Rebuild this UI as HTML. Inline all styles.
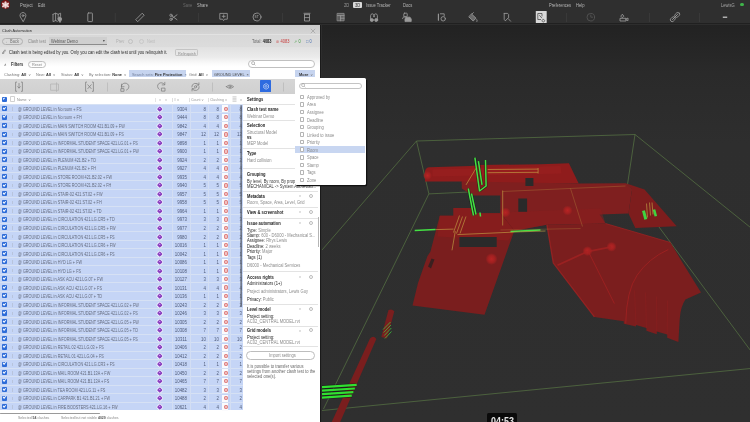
<!DOCTYPE html>
<html><head><meta charset="utf-8">
<style>
*{box-sizing:border-box;margin:0;padding:0}
html,body{width:750px;height:422px;overflow:hidden;background:#2d2d2d;font-family:"Liberation Sans",sans-serif}
.a{position:absolute}
.t{position:absolute;white-space:nowrap;line-height:1}
#menubar{left:0;top:0;width:750px;height:10.5px;background:#2f2f2f}
#toolbar{left:0;top:10.5px;width:750px;height:13.5px;background:#2f2f2f;border-bottom:0.6px solid #202020}
.mi{font-size:45.92px;color:#b9b9b9;top:2.5px;transform:scale(.0893,.1);transform-origin:0 0}
.sep{position:absolute;top:13px;width:0.6px;height:9px;background:#4a4a4a}
.ic{position:absolute;top:11px;width:14px;height:12px}
#panel{left:0;top:24.5px;width:320.5px;height:397.5px;background:#fff;border-right:1px solid #1a1a1a;overflow:hidden}
#phead{left:0;top:0;width:320px;height:10px;background:linear-gradient(#cbcbcb,#d5d5d5);border-bottom:0.5px solid #e2e2e2}
#ptop{left:0;top:10px;width:320px;height:44px;background:linear-gradient(#d8d8d8 0%,#dcdcdc 27.3%,#e1e1e1 28.4%,#ebebeb 50%,#f9f9f9 63.6%,#ffffff 72.7%)}
.pill{position:absolute;border:0.6px solid #9a9a9a;border-radius:4px;background:transparent}
.chip{position:absolute;background:#c6d4ef;height:7.2px;top:45.8px}
.f{font-size:43.68px;color:#777;top:47.6px;transform:scale(.0893,.1);transform-origin:0 0}
.f b{color:#333}
#ptools{left:0;top:54px;width:320px;height:15px;background:linear-gradient(#d6d6d6,#d0d0d0)}
#thead{left:0;top:69px;width:243px;height:10.2px;background:#fff}
.row{position:absolute;left:0;width:243px;height:8.514px;background:#c5d5f6;border-top:0.5px solid #d6e1f4}
.row .cb{position:absolute;left:2px;top:1.4px;width:4.8px;height:5.1px;background:#2d6cd8;border-radius:0.9px}
.row .cb:after{content:"";position:absolute;left:1.2px;top:0.9px;width:1.9px;height:1.1px;border-left:0.7px solid #fff;border-bottom:0.7px solid #fff;transform:rotate(-45deg)}
.row .tick{position:absolute;left:12.3px;top:2.5px;width:0.4px;height:3.5px;background:#b8c4dc}
.row .nm{position:absolute;left:17.6px;top:2.1px;font-size:47px;line-height:1;color:#656c7e;white-space:nowrap;transform:scale(.0809,.1);transform-origin:0 0}
.row .pu{position:absolute;left:157.7px;top:2.1px;width:3.6px;height:3.6px;border-radius:0.8px;background:#8a3fc0;transform:rotate(45deg);box-shadow:0 0 0.3px 0.8px rgba(255,255,255,0.75)}
.row .pu:after{content:"";position:absolute;left:1.2px;top:1.2px;width:1.2px;height:1.2px;background:#f0c8f8;border-radius:50%}
.row span.id,.row span.ct,.row span.cl,.row span.v4{position:absolute;top:2.1px;font-size:47px;line-height:1;color:#505c7a;text-align:right;width:213.4px;transform:scale(.0937,.1);transform-origin:0 0}
.row span.id{left:167.2px}
.row span.ct{left:185.7px}
.row span.cl{left:199.2px}
.row span.v4{left:222.3px}
.row .st{position:absolute;left:221.9px;top:0.6px;width:6px;height:7.4px;background:#fbfbfd}
.row .st:after{content:"";position:absolute;left:1.9px;top:1.4px;width:2.1px;height:2.3px;background:#f2c4c4;border:0.4px solid #de8080;border-radius:40%}
.colsep{position:absolute;top:79.2px;width:0.7px;height:306.5px;background:#d3def3}
#settings{left:242.5px;top:69px;width:76px;height:328.5px;background:#fff}
#setshadow{left:239.6px;top:80.1px;width:2.6px;height:202.4px;background:linear-gradient(90deg,rgba(110,118,135,0.5),rgba(80,86,100,0.85));border-radius:1px}
.sh{font-size:45.92px;color:#222;font-weight:bold;transform:scale(.0893,.1);transform-origin:0 0}
.sv{font-size:45.92px;color:#8a8a8a;transform:scale(.0893,.1);transform-origin:0 0}
.sk{font-size:45.92px;color:#333;transform:scale(.0893,.1);transform-origin:0 0}
.hr{position:absolute;left:0.5px;width:75px;height:0.5px;background:#e3e3e3}
.sv b,.sk b{color:#262626;font-weight:normal}
.gear{width:4px;height:4px;border:0.6px solid #bbb;border-radius:50%}
#settings{overflow:hidden}
#popup{left:295.4px;top:77.7px;width:70.6px;height:107.2px;background:#fff;border-radius:1.5px;box-shadow:1.2px 1.2px 0 #121212}
.pit{position:absolute;left:0;width:70px;height:7.4px}
.pit.hl{background:#c8d6f1}
.pit i{position:absolute;left:4.4px;top:1.5px;width:4.6px;height:4.6px;border:0.5px solid #b5b5b5;border-radius:0.9px;background:#fff}
.pit span{position:absolute;left:11.7px;top:1.8px;font-size:45.92px;line-height:1;color:#8a8a8a;white-space:nowrap;transform:scale(.0893,.1);transform-origin:0 0}
#view{left:321.5px;top:24.5px;width:428.5px;height:397.5px;background:#2e2e2e;overflow:hidden}
</style></head><body>
<div id="root" style="position:absolute;left:0;top:0;width:750px;height:422px;overflow:hidden;will-change:transform">
<div id="menubar" class="a">
  <div class="a" style="left:1.4px;top:-0.4px;width:9px;height:9.6px;border-radius:50%;background:#761313"></div>
  <svg class="a" style="left:1.4px;top:-0.4px" width="9" height="9.6" viewBox="0 0 10 10.6"><g stroke="#e9cfcf" stroke-width="2.3" stroke-linecap="round"><line x1="5" y1="2.4" x2="5" y2="8.4"/><line x1="2.2" y1="4" x2="7.8" y2="7"/><line x1="2.2" y1="7" x2="7.8" y2="4"/></g><circle cx="5" cy="5.4" r="1" fill="#f4e4e4"/></svg>
  <span class="t mi" style="left:20px">Project</span>
  <span class="t mi" style="left:38px">Edit</span>
  <span class="t mi" style="left:182.5px;color:#6a6a6a">Save</span>
  <span class="t mi" style="left:196.7px">Share</span>
  <span class="t mi" style="left:344px;color:#9a9a9a">2D</span>
  <div class="a" style="left:353.3px;top:2px;width:8.4px;height:5.8px;background:#d8d8d8;border-radius:1px"></div>
  <span class="t mi" style="left:354.8px;color:#333;top:2.9px">3D</span>
  <span class="t mi" style="left:366px">Issue Tracker</span>
  <span class="t mi" style="left:402.5px">Docs</span>
  <span class="t mi" style="left:548.7px">Preferences</span>
  <span class="t mi" style="left:575.8px">Help</span>
  <span class="t mi" style="left:721px;color:#a9a9a9">LewisG</span>
  <div class="a" style="left:740px;top:2.7px;width:3.6px;height:3.6px;border-radius:50%;background:#3fb34a"></div>
</div>
<div id="toolbar" class="a"></div>
<svg class="a" style="left:0;top:0" width="750" height="25" viewBox="0 0 750 25">
<g fill="none" stroke="#9a9a9a" stroke-width="0.85" stroke-linecap="round" stroke-linejoin="round">
  <!-- pin -->
  <path d="M23 21.4 L20.4 17 A3 3 0 1 1 25.6 17 Z"/><circle cx="23" cy="15.6" r="0.9"/>
  <!-- map with pin -->
  <path d="M53 14.3 L55.6 13.2 L58.2 14.3 L60.6 13.2 V16.4 M58.2 14.3 V18.4 M55.6 13.2 V20.6 M53 14.3 V21.6 L55.6 20.6 L57.4 21.3"/>
  <path d="M59.8 22.2 L58.1 19.8 A1.9 1.9 0 1 1 61.5 19.8 Z" fill="#9a9a9a"/>
  <!-- phone -->
  <rect x="87.8" y="13" width="4.6" height="8.6" rx="0.6"/>
  <!-- ruler -->
  <path d="M136 19.4 L142.2 13.2 L144.2 15.2 L138 21.4 Z"/>
  <!-- scissors -->
  <circle cx="171" cy="15.3" r="1.2"/><circle cx="171" cy="19.3" r="1.2"/>
  <path d="M172 16 L177 19.7 M172 18.6 L177 14.8"/>
  <!-- comment plus -->
  <path d="M220.2 13.4 H227.3 V19.2 H224.6 L223.6 20.6 L222.6 19.2 H220.2 Z"/><path d="M223.7 14.8 V17.8 M222.2 16.3 H225.2"/>
  <!-- ST -->
  <circle cx="257" cy="17" r="4"/>
  <!-- stack -->
  <path d="M304 13.3 H310 M304.5 14.6 H309.5 M304.5 14.6 V21 H309.5 V14.6 M304.5 17.6 H309.5"/>
  <!-- grid -->
  <rect x="337.5" y="13.4" width="6.6" height="7.4" fill="#5c5c5c" stroke="#8c8c8c"/><path d="M337.5 15.6 H344.1 M340.6 15.6 V20.8 M340.6 18.2 H344.1"/>
  <!-- binoculars -->
  <path d="M370.6 20 V15.6 Q370.8 13.8 372.4 13.8 Q373.6 13.8 373.7 15.4 V17 H374.3 V15.4 Q374.4 13.8 375.6 13.8 Q377.2 13.8 377.4 15.6 V20"/>
  <circle cx="371.8" cy="20" r="1.5" fill="#9a9a9a"/><circle cx="376.2" cy="20" r="1.5" fill="#9a9a9a"/>
  <!-- people+car -->
  <rect x="403.8" y="13.2" width="3.4" height="3.6" rx="0.6"/><path d="M402.6 18.6 L403.6 16.8 H406.2"/>
  <path d="M405 21.2 V19 L406 17.2 H410 L411.2 19 V21.2 Z" fill="#9a9a9a"/>
  <!-- icon 441 -->
  <path d="M438.4 14 V20.2" stroke-width="1.1"/><path d="M440.4 13.8 H444.2 V16"/><circle cx="443.2" cy="18.8" r="2.2"/>
  <!-- paint bucket -->
  <path d="M471.8 14.2 L476 18.2 L473.2 21 L469 17 Z" fill="#6a6a6a"/><path d="M471.8 14.2 L473.4 12.6 M476.8 19.6 Q477.6 21 477 21.6"/>
  <!-- icon 507 -->
  <path d="M504.2 13.4 H507.6 L508.6 14.4 V17.6 M504.2 13.4 V19.4 L505.4 20.8 M505.6 20.6 L507.8 18.2 L510.6 21.2"/>
  <!-- clock dim -->
  <circle cx="590.8" cy="17.2" r="3.8" stroke="#555"/><path d="M590.8 15 V17.2 H592.6" stroke="#555"/>
  <!-- person+camera -->
  <path d="M622.3 14.6 A1.4 1.4 0 1 0 622.4 14.6 M620 20.6 V18.3 H626 V20.6 Z M626 19 L628 18 V20.6 L626 19.8"/>
  <!-- link -->
  <path d="M672.5 19.5 L677.5 14.5" stroke-width="1"/><rect x="671" y="16.5" width="3.6" height="5.4" rx="1.8" transform="rotate(45 672.8 19.2)"/><rect x="675.4" y="12.2" width="3.6" height="5.4" rx="1.8" transform="rotate(45 677.2 14.9)"/>
</g>
<g fill="#8c8c8c" font-family="Liberation Sans" font-size="3.2" font-weight="bold"><text x="254.6" y="18.2">ST</text></g>
<g fill="#444"><rect x="114.9" y="13" width="0.5" height="9"/><rect x="198.1" y="13" width="0.5" height="9"/><rect x="282.3" y="13" width="0.5" height="9"/><rect x="566.5" y="13" width="0.5" height="9"/><rect x="649.3" y="13" width="0.5" height="9"/><rect x="699.5" y="13" width="0.5" height="9"/></g>
<rect x="535.8" y="10.9" width="10.9" height="12.1" fill="#d9d9d9" rx="0.6"/>
<path d="M537.8 13.5 H542 V16.4 M537.8 13.5 V19.5 H541 M539.3 15.2 L542 18.2 M543.3 19.4 A1.3 1.3 0 1 0 543.4 19.4" stroke="#3c3c3c" stroke-width="0.7" fill="none"/>
<rect x="722.8" y="16.6" width="4.4" height="1.2" fill="#d0d0d0"/>
</svg>

<div id="panel" class="a">
  <div id="phead" class="a"></div>
  <span class="t" style="left:2px;top:3.9px;font-size:42.56px;color:#2a2a2a;transform:scale(.0893,.1);transform-origin:0 0">Clash Automation</span>
  <svg class="a" style="left:309.5px;top:3px" width="6" height="6" viewBox="0 0 6 6"><g stroke="#8a8a8a" stroke-width="0.5"><line x1="0.8" y1="0.8" x2="5.2" y2="5.2"/><line x1="5.2" y1="0.8" x2="0.8" y2="5.2"/></g></svg>
  <div id="ptop" class="a"></div>
  <!-- back row -->
  <div class="pill" style="left:2px;top:13.2px;width:20.5px;height:7.1px;border-color:#b0b0b0"></div>
  <span class="t" style="left:5px;top:14.7px;font-size:44.8px;color:#777;transform:scale(.0893,.1);transform-origin:0 0">&#8592; Back</span>
  <span class="t" style="left:28px;top:14.7px;font-size:44.8px;color:#8a8a8a;transform:scale(.0893,.1);transform-origin:0 0">Clash test</span>
  <div class="a" style="left:48.5px;top:12.8px;width:58.5px;height:7.5px;background:#cfcfcf;border-bottom:0.6px solid #8c8c8c"></div>
  <span class="t" style="left:51px;top:14.7px;font-size:44.8px;color:#555;transform:scale(.0893,.1);transform-origin:0 0">Webinar Demo</span>
  <span class="t" style="left:102.8px;top:14.9px;font-size:40.32px;color:#444;transform:scale(.0893,.1);transform-origin:0 0">&#9662;</span>
  <span class="t" style="left:116px;top:14.7px;font-size:44.8px;color:#b0b0b0;transform:scale(.0893,.1);transform-origin:0 0">Prev</span>
  <div class="a" style="left:128.3px;top:14px;width:5px;height:5px;border:0.5px solid #c0c0c0;border-radius:50%"></div>
  <div class="a" style="left:138.5px;top:14px;width:5px;height:5px;border:0.5px solid #c8c8c8;border-radius:50%"></div>
  <span class="t" style="left:147px;top:14.7px;font-size:44.8px;color:#bcbcbc;transform:scale(.0893,.1);transform-origin:0 0">Next</span>
  <span class="t" style="left:252px;top:14.6px;font-size:44.8px;color:#666;transform:scale(.0893,.1);transform-origin:0 0">Total: <b style="color:#222">4083</b></span>
  <span class="t" style="left:275.5px;top:14.6px;font-size:44.8px;color:#c83a3a;transform:scale(.0893,.1);transform-origin:0 0">&#8856; 4083</span>
  <span class="t" style="left:294px;top:14.6px;font-size:44.8px;color:#3a9a3a;transform:scale(.0893,.1);transform-origin:0 0">&#8599; 0</span>
  <span class="t" style="left:306px;top:14.6px;font-size:44.8px;color:#4a70b0;transform:scale(.0893,.1);transform-origin:0 0">&#9633; 0</span>
  <!-- notice -->
  <svg class="a" style="left:2.3px;top:24.3px" width="4" height="5" viewBox="0 0 4 5"><path d="M0.6 4.4 L0.9 3.2 L3 0.8 L3.7 1.5 L1.6 3.9 Z M0.4 4.8 H2.2" stroke="#444" stroke-width="0.45" fill="none"/></svg>
  <span class="t" style="left:9px;top:25.5px;font-size:46.144px;color:#2c2c2c;transform:scale(.0893,.1);transform-origin:0 0">Clash test is being edited by you. Only you can edit the clash test until you relinquish it.</span>
  <div class="pill" style="left:175px;top:24.5px;width:22.5px;height:6.7px;border-radius:1.2px;border-color:#c4c4c4"></div>
  <span class="t" style="left:177.5px;top:26.1px;font-size:42.56px;color:#8a8a8a;transform:scale(.0893,.1);transform-origin:0 0">Relinquish</span>
  <!-- filters -->
  <span class="t" style="left:4px;top:37px;font-size:44.8px;color:#555;transform:scale(.0893,.1);transform-origin:0 0">&#8743;</span>
  <span class="t" style="left:11px;top:37px;font-size:45.92px;color:#333;font-weight:bold;transform:scale(.0893,.1);transform-origin:0 0">Filters</span>
  <div class="pill" style="left:27.5px;top:36.3px;width:18px;height:6.8px;border-color:#bdbdbd"></div>
  <span class="t" style="left:32px;top:37.6px;font-size:42.56px;color:#888;transform:scale(.0893,.1);transform-origin:0 0">Reset</span>
  <div class="pill" style="left:248.3px;top:35.5px;width:66.4px;height:7.5px;border-color:#c0c0c0;background:#fff"></div>
  <svg class="a" style="left:250.8px;top:36.8px" width="5" height="5" viewBox="0 0 5 5"><circle cx="2.1" cy="2.1" r="1.5" stroke="#777" stroke-width="0.5" fill="none"/><path d="M3.2 3.2 L4.4 4.4" stroke="#777" stroke-width="0.5"/></svg>
  <span class="t f" style="left:4px">Clashing: <b>All</b> &nbsp;&#709;</span>
  <span class="t f" style="left:36px">New: <b>All</b> &nbsp;&#709;</span>
  <span class="t f" style="left:61px">Status: <b>All</b> &nbsp;&#709;</span>
  <span class="t f" style="left:89px">By selection: <b>None</b> &nbsp;&#709;</span>
  <div class="chip" style="left:129.2px;width:56.6px"></div>
  <span class="t f" style="left:132px;color:#6f7c99">Search sets: <b>Fire Protection</b> &nbsp;&#215;</span>
  <span class="t f" style="left:189px">Grid: <b>All</b> &nbsp;&#709;</span>
  <div class="chip" style="left:211.7px;width:38.3px"></div>
  <span class="t f" style="left:214px;color:#444">GROUND LEVEL &nbsp;&#215;</span>
  <div class="chip" style="left:295.3px;width:19.4px"></div>
  <span class="t f" style="left:299px"><b>More</b> &nbsp;&#709;</span>
  <!-- panel toolbar -->
  <div id="ptools" class="a"></div>
  <svg class="a" style="left:0;top:54px" width="320" height="15" viewBox="0 78.5 320 15">
<g fill="none" stroke="#7e7e7e" stroke-width="0.75" stroke-linecap="round" stroke-linejoin="round">
  <path d="M16.6 81.6 H15.6 V90.8 H16.6 M21.4 81.6 H22.4 V90.8 H21.4 M19 83 V87.4 M17.7 86.2 L19 87.6 L20.3 86.2"/>
  <path d="M51 83.5 H58.5 V89.8 H51 Z M56.5 82.3 V91" stroke="#b3b3b3"/>
  <path d="M86.6 81.6 H85.6 V90.8 H86.6 M92.4 81.6 H93.4 V90.8 H92.4 M87.8 84.3 L91.2 88.1 M91.2 84.3 L87.8 88.1"/>
  <path d="M121.8 88 A3.8 3.6 0 1 1 126.5 89.6 M121.6 83.6 L121.4 86.4 L124 86.2"/><rect x="121.2" y="88.2" width="2.8" height="2.6"/>
  <path d="M164.6 84 A3.8 3.6 0 1 0 159.2 88.8 M164.8 81.8 L164.8 84.4 L162.2 84.4"/><rect x="161.8" y="87.6" width="3.2" height="3"/>
  <path d="M191.8 86.4 A3.8 3.4 0 0 1 198.8 84.4 M199.2 86.2 A3.8 3.4 0 0 1 192.2 88.4 M198.9 82.4 L198.9 84.6 L196.8 84.6 M192 90.4 L192 88.2 L194.2 88.2"/><circle cx="195.5" cy="86.3" r="1.1"/>
  <path d="M226.4 86.2 Q230 82.8 233.6 86.2 Q230 89.6 226.4 86.2 Z"/><circle cx="230" cy="86.2" r="1"/>
</g>
<g fill="#aaaaaa"><rect x="107.3" y="82" width="0.5" height="9"/><rect x="212.3" y="82" width="0.5" height="9"/><rect x="283.3" y="82" width="0.5" height="9"/></g>
</svg>

  <div class="a" style="left:260.3px;top:55.8px;width:10.5px;height:11.7px;background:#2e6be0;border-radius:0.6px"></div>
  <svg class="a" style="left:262.5px;top:58.3px" width="6.2" height="6.8" viewBox="0 0 6 7"><path d="M3 0.6 L5.4 2 L5.4 5 L3 6.4 L0.6 5 L0.6 2 Z" stroke="#fff" stroke-width="0.55" fill="none"/><circle cx="3" cy="3.5" r="1" stroke="#fff" stroke-width="0.5" fill="none"/></svg>
  <!-- table header -->
  <div id="thead" class="a"></div>
  <div class="a" style="left:2px;top:72.1px;width:4.8px;height:5.2px;background:#2d6cd8;border-radius:0.9px"></div>
  <div class="a" style="left:9.8px;top:71.8px;width:5px;height:5.5px;border:0.5px solid #d2d2d2;border-radius:0.9px"></div><div class="a" style="left:3.2px;top:73.4px;width:2px;height:1.2px;border-left:0.6px solid #fff;border-bottom:0.6px solid #fff;transform:rotate(-45deg)"></div>
  <span class="t" style="left:17px;top:73px;font-size:40.32px;color:#888;transform:scale(.0893,.1);transform-origin:0 0">Name &nbsp;&#709;</span>
  <span class="t" style="left:154.5px;top:73px;font-size:40.32px;color:#aaa;transform:scale(.0893,.1);transform-origin:0 0">| &nbsp;&nbsp;&#709; &nbsp;&nbsp;&nbsp;&#709;</span>
  <span class="t" style="left:172px;top:73px;font-size:40.32px;color:#999;transform:scale(.0893,.1);transform-origin:0 0">| # &#709;</span>
  <span class="t" style="left:189px;top:73px;font-size:40.32px;color:#999;transform:scale(.0893,.1);transform-origin:0 0">| Count &#709;</span>
  <span class="t" style="left:207.5px;top:73px;font-size:40.32px;color:#999;transform:scale(.0893,.1);transform-origin:0 0">| Clashing &#709;</span>
  <svg class="a" style="left:231.5px;top:71.6px" width="5" height="6" viewBox="0 0 5 6"><path d="M0.5 0.8 H4.5 M0.5 2.3 H4.5 M0.5 3.8 H4.5 M0.5 5.3 H4.5" stroke="#999" stroke-width="0.45"/></svg>
  <span class="t" style="left:239.8px;top:73px;font-size:40.32px;color:#999;transform:scale(.0893,.1);transform-origin:0 0">&#709;</span>
</div>
<div class="a" style="left:0;top:24.5px;width:320.5px;height:397.5px;overflow:hidden;pointer-events:none">
<div class="row" style="top:79.20px"><i class="cb"></i><i class="tick"></i><span class="nm">@ GROUND LEVEL in No room + FS</span><i class="pu"></i><span class="id">9304</span><span class="ct">8</span><span class="cl">8</span><i class="st"></i><span class="v4">8</span></div>
<div class="row" style="top:87.71px"><i class="cb"></i><i class="tick"></i><span class="nm">@ GROUND LEVEL in No room + FH</span><i class="pu"></i><span class="id">9444</span><span class="ct">8</span><span class="cl">8</span><i class="st"></i><span class="v4">8</span></div>
<div class="row" style="top:96.23px"><i class="cb"></i><i class="tick"></i><span class="nm">@ GROUND LEVEL in MAIN SWITCH ROOM 421.B1.09 + FW</span><i class="pu"></i><span class="id">9842</span><span class="ct">4</span><span class="cl">4</span><i class="st"></i><span class="v4">4</span></div>
<div class="row" style="top:104.74px"><i class="cb"></i><i class="tick"></i><span class="nm">@ GROUND LEVEL in MAIN SWITCH ROOM 421.B1.09 + FS</span><i class="pu"></i><span class="id">9847</span><span class="ct">12</span><span class="cl">12</span><i class="st"></i><span class="v4">12</span></div>
<div class="row" style="top:113.26px"><i class="cb"></i><i class="tick"></i><span class="nm">@ GROUND LEVEL in INFORMAL STUDENT SPACE 421.LG.01 + FS</span><i class="pu"></i><span class="id">9898</span><span class="ct">1</span><span class="cl">1</span><i class="st"></i><span class="v4">1</span></div>
<div class="row" style="top:121.77px"><i class="cb"></i><i class="tick"></i><span class="nm">@ GROUND LEVEL in INFORMAL STUDENT SPACE 421.LG.01 + FW</span><i class="pu"></i><span class="id">9900</span><span class="ct">1</span><span class="cl">1</span><i class="st"></i><span class="v4">1</span></div>
<div class="row" style="top:130.28px"><i class="cb"></i><i class="tick"></i><span class="nm">@ GROUND LEVEL in PLENUM 421.B2 + TD</span><i class="pu"></i><span class="id">9924</span><span class="ct">2</span><span class="cl">2</span><i class="st"></i><span class="v4">2</span></div>
<div class="row" style="top:138.80px"><i class="cb"></i><i class="tick"></i><span class="nm">@ GROUND LEVEL in PLENUM 421.B2 + FH</span><i class="pu"></i><span class="id">9927</span><span class="ct">4</span><span class="cl">4</span><i class="st"></i><span class="v4">4</span></div>
<div class="row" style="top:147.31px"><i class="cb"></i><i class="tick"></i><span class="nm">@ GROUND LEVEL in STORE ROOM 421.B2.02 + FW</span><i class="pu"></i><span class="id">9935</span><span class="ct">4</span><span class="cl">4</span><i class="st"></i><span class="v4">4</span></div>
<div class="row" style="top:155.83px"><i class="cb"></i><i class="tick"></i><span class="nm">@ GROUND LEVEL in STORE ROOM 421.B2.02 + FH</span><i class="pu"></i><span class="id">9940</span><span class="ct">5</span><span class="cl">5</span><i class="st"></i><span class="v4">5</span></div>
<div class="row" style="top:164.34px"><i class="cb"></i><i class="tick"></i><span class="nm">@ GROUND LEVEL in STAIR-02 421.ST.02 + FW</span><i class="pu"></i><span class="id">9957</span><span class="ct">5</span><span class="cl">5</span><i class="st"></i><span class="v4">5</span></div>
<div class="row" style="top:172.85px"><i class="cb"></i><i class="tick"></i><span class="nm">@ GROUND LEVEL in STAIR-02 421.ST.02 + FH</span><i class="pu"></i><span class="id">9958</span><span class="ct">5</span><span class="cl">5</span><i class="st"></i><span class="v4">5</span></div>
<div class="row" style="top:181.37px"><i class="cb"></i><i class="tick"></i><span class="nm">@ GROUND LEVEL in STAIR-02 421.ST.02 + TD</span><i class="pu"></i><span class="id">9964</span><span class="ct">1</span><span class="cl">1</span><i class="st"></i><span class="v4">1</span></div>
<div class="row" style="top:189.88px"><i class="cb"></i><i class="tick"></i><span class="nm">@ GROUND LEVEL in CIRCULATION 421.LG.CR5 + TD</span><i class="pu"></i><span class="id">9973</span><span class="ct">3</span><span class="cl">3</span><i class="st"></i><span class="v4">3</span></div>
<div class="row" style="top:198.40px"><i class="cb"></i><i class="tick"></i><span class="nm">@ GROUND LEVEL in CIRCULATION 421.LG.CR5 + FW</span><i class="pu"></i><span class="id">9977</span><span class="ct">2</span><span class="cl">2</span><i class="st"></i><span class="v4">2</span></div>
<div class="row" style="top:206.91px"><i class="cb"></i><i class="tick"></i><span class="nm">@ GROUND LEVEL in CIRCULATION 421.LG.CR5 + FS</span><i class="pu"></i><span class="id">9980</span><span class="ct">2</span><span class="cl">2</span><i class="st"></i><span class="v4">2</span></div>
<div class="row" style="top:215.42px"><i class="cb"></i><i class="tick"></i><span class="nm">@ GROUND LEVEL in CIRCULATION 421.LG.CR6 + FW</span><i class="pu"></i><span class="id">10016</span><span class="ct">1</span><span class="cl">1</span><i class="st"></i><span class="v4">1</span></div>
<div class="row" style="top:223.94px"><i class="cb"></i><i class="tick"></i><span class="nm">@ GROUND LEVEL in CIRCULATION 421.LG.CR6 + FS</span><i class="pu"></i><span class="id">10042</span><span class="ct">1</span><span class="cl">1</span><i class="st"></i><span class="v4">1</span></div>
<div class="row" style="top:232.45px"><i class="cb"></i><i class="tick"></i><span class="nm">@ GROUND LEVEL in HYD LG + FW</span><i class="pu"></i><span class="id">10086</span><span class="ct">1</span><span class="cl">1</span><i class="st"></i><span class="v4">1</span></div>
<div class="row" style="top:240.97px"><i class="cb"></i><i class="tick"></i><span class="nm">@ GROUND LEVEL in HYD LG + FS</span><i class="pu"></i><span class="id">10108</span><span class="ct">1</span><span class="cl">1</span><i class="st"></i><span class="v4">1</span></div>
<div class="row" style="top:249.48px"><i class="cb"></i><i class="tick"></i><span class="nm">@ GROUND LEVEL in ASK ACU 421.LG.07 + FW</span><i class="pu"></i><span class="id">10127</span><span class="ct">3</span><span class="cl">3</span><i class="st"></i><span class="v4">3</span></div>
<div class="row" style="top:257.99px"><i class="cb"></i><i class="tick"></i><span class="nm">@ GROUND LEVEL in ASK ACU 421.LG.07 + FS</span><i class="pu"></i><span class="id">10131</span><span class="ct">4</span><span class="cl">4</span><i class="st"></i><span class="v4">4</span></div>
<div class="row" style="top:266.51px"><i class="cb"></i><i class="tick"></i><span class="nm">@ GROUND LEVEL in ASK ACU 421.LG.07 + TD</span><i class="pu"></i><span class="id">10136</span><span class="ct">1</span><span class="cl">1</span><i class="st"></i><span class="v4">1</span></div>
<div class="row" style="top:275.02px"><i class="cb"></i><i class="tick"></i><span class="nm">@ GROUND LEVEL in INFORMAL STUDENT SPACE 421.LG.02 + FW</span><i class="pu"></i><span class="id">10243</span><span class="ct">2</span><span class="cl">2</span><i class="st"></i><span class="v4">2</span></div>
<div class="row" style="top:283.54px"><i class="cb"></i><i class="tick"></i><span class="nm">@ GROUND LEVEL in INFORMAL STUDENT SPACE 421.LG.02 + FS</span><i class="pu"></i><span class="id">10246</span><span class="ct">3</span><span class="cl">3</span><i class="st"></i><span class="v4">3</span></div>
<div class="row" style="top:292.05px"><i class="cb"></i><i class="tick"></i><span class="nm">@ GROUND LEVEL in INFORMAL STUDENT SPACE 421.LG.05 + FW</span><i class="pu"></i><span class="id">10305</span><span class="ct">2</span><span class="cl">2</span><i class="st"></i><span class="v4">2</span></div>
<div class="row" style="top:300.56px"><i class="cb"></i><i class="tick"></i><span class="nm">@ GROUND LEVEL in INFORMAL STUDENT SPACE 421.LG.05 + TD</span><i class="pu"></i><span class="id">10308</span><span class="ct">7</span><span class="cl">7</span><i class="st"></i><span class="v4">7</span></div>
<div class="row" style="top:309.08px"><i class="cb"></i><i class="tick"></i><span class="nm">@ GROUND LEVEL in INFORMAL STUDENT SPACE 421.LG.05 + FS</span><i class="pu"></i><span class="id">10311</span><span class="ct">10</span><span class="cl">10</span><i class="st"></i><span class="v4">10</span></div>
<div class="row" style="top:317.59px"><i class="cb"></i><i class="tick"></i><span class="nm">@ GROUND LEVEL in RETAIL 02 421.LG.03 + FS</span><i class="pu"></i><span class="id">10406</span><span class="ct">2</span><span class="cl">2</span><i class="st"></i><span class="v4">2</span></div>
<div class="row" style="top:326.11px"><i class="cb"></i><i class="tick"></i><span class="nm">@ GROUND LEVEL in RETAIL 01 421.LG.04 + FS</span><i class="pu"></i><span class="id">10412</span><span class="ct">2</span><span class="cl">2</span><i class="st"></i><span class="v4">2</span></div>
<div class="row" style="top:334.62px"><i class="cb"></i><i class="tick"></i><span class="nm">@ GROUND LEVEL in CIRCULATION 421.LG.CR3 + FS</span><i class="pu"></i><span class="id">10418</span><span class="ct">1</span><span class="cl">1</span><i class="st"></i><span class="v4">1</span></div>
<div class="row" style="top:343.13px"><i class="cb"></i><i class="tick"></i><span class="nm">@ GROUND LEVEL in MAIL ROOM 421.B1.13A + FW</span><i class="pu"></i><span class="id">10450</span><span class="ct">2</span><span class="cl">2</span><i class="st"></i><span class="v4">2</span></div>
<div class="row" style="top:351.65px"><i class="cb"></i><i class="tick"></i><span class="nm">@ GROUND LEVEL in MAIL ROOM 421.B1.13A + FS</span><i class="pu"></i><span class="id">10465</span><span class="ct">7</span><span class="cl">7</span><i class="st"></i><span class="v4">7</span></div>
<div class="row" style="top:360.16px"><i class="cb"></i><i class="tick"></i><span class="nm">@ GROUND LEVEL in TEA ROOM 421.LG.11 + FS</span><i class="pu"></i><span class="id">10482</span><span class="ct">3</span><span class="cl">3</span><i class="st"></i><span class="v4">3</span></div>
<div class="row" style="top:368.68px"><i class="cb"></i><i class="tick"></i><span class="nm">@ GROUND LEVEL in CARPARK B1 421.B1.21 + FW</span><i class="pu"></i><span class="id">10488</span><span class="ct">2</span><span class="cl">2</span><i class="st"></i><span class="v4">2</span></div>
<div class="row" style="top:377.19px"><i class="cb"></i><i class="tick"></i><span class="nm">@ GROUND LEVEL in FIRE BOOSTERS 421.LG.16 + FW</span><i class="pu"></i><span class="id">10621</span><span class="ct">4</span><span class="cl">4</span><i class="st"></i><span class="v4">4</span></div>
<div class="colsep" style="left:172.3px"></div><div class="colsep" style="left:189.6px"></div><div class="colsep" style="left:208.3px"></div><div class="colsep" style="left:229.6px"></div>
<div class="a" style="left:0;top:388px;width:100px;height:1.6px;background:#9a9a9a;border-radius:1px"></div>
<span class="t" style="left:18px;top:391.4px;font-size:39.2px;color:#888;transform:scale(.0893,.1);transform-origin:0 0">Selected <b style="color:#555">54</b> clashes</span>
<span class="t" style="left:61px;top:391.4px;font-size:39.2px;color:#888;transform:scale(.0893,.1);transform-origin:0 0">Selected but not visible <b style="color:#555">4029</b> clashes</span>
<div id="setshadow" class="a"></div>
<div id="settings" class="a">
<span class="t sh" style="left:4.30px;top:3.73px;">Settings</span>
<div class="hr" style="top:10.10px"></div>
<span class="t sh" style="left:4.30px;top:13.33px;">Clash test name</span>
<span class="t sv" style="left:4.30px;top:20.53px;">Webinar Demo</span>
<div class="hr" style="top:26.50px"></div>
<span class="t sh" style="left:4.30px;top:29.73px;">Selection</span>
<span class="t sv" style="left:4.30px;top:36.53px;">Structural Model</span>
<span class="t sh" style="left:4.30px;top:41.93px;">vs</span>
<span class="t sv" style="left:4.30px;top:47.73px;">MEP Model</span>
<div class="hr" style="top:54.10px"></div>
<span class="t sh" style="left:4.30px;top:57.23px;">Type</span>
<span class="t sv" style="left:4.30px;top:64.23px;">Hard collision</span>
<div class="hr" style="top:74.30px"></div>
<span class="t sh" style="left:4.30px;top:78.13px;">Grouping</span>
<span class="t sk" style="left:4.30px;top:85.33px;">By level, By room, By property</span>
<span class="t sk" style="left:4.30px;top:90.23px;">MECHANICAL -&gt; System Abbreviati...</span>
<div class="hr" style="top:97.20px"></div>
<span class="t sh" style="left:4.30px;top:100.03px;">Metadata</span>
<span class="t" style="left:56.70px;top:100.40px;font-size:38.08px;color:#999;transform:scale(.0893,.1);transform-origin:0 0">&#709;</span>
<div class="a gear" style="left:66.50px;top:100.00px"></div>
<span class="t sv" style="left:4.30px;top:106.93px;">Room, Space, Area, Level, Grid</span>
<div class="hr" style="top:113.50px"></div>
<span class="t sh" style="left:4.30px;top:116.53px;">View &amp; screenshot</span>
<span class="t" style="left:56.70px;top:116.90px;font-size:38.08px;color:#999;transform:scale(.0893,.1);transform-origin:0 0">&#709;</span>
<div class="a gear" style="left:66.50px;top:116.50px"></div>
<div class="hr" style="top:124.20px"></div>
<span class="t sh" style="left:4.30px;top:127.53px;">Issue automation</span>
<span class="t" style="left:56.70px;top:127.90px;font-size:38.08px;color:#999;transform:scale(.0893,.1);transform-origin:0 0">&#709;</span>
<div class="a gear" style="left:66.50px;top:127.50px"></div>
<span class="t sv" style="left:4.30px;top:134.63px;"><b>Type:</b> Simple</span>
<span class="t sv" style="left:4.30px;top:139.53px;"><b>Stamp:</b> 600 - D6000 - Mechanical S...</span>
<span class="t sv" style="left:4.30px;top:144.93px;"><b>Assignee:</b> Rhys Lewis</span>
<span class="t sv" style="left:4.30px;top:150.53px;"><b>Deadline:</b> 2 weeks</span>
<span class="t sv" style="left:4.30px;top:155.63px;"><b>Priority:</b> Major</span>
<span class="t sv" style="left:4.30px;top:161.33px;"><b>Tags (1)</b></span>
<span class="t sv" style="left:4.30px;top:169.43px;">D6000 - Mechanical Services</span>
<div class="hr" style="top:177.00px"></div>
<span class="t sh" style="left:4.30px;top:181.13px;">Access rights</span>
<span class="t" style="left:56.70px;top:181.50px;font-size:38.08px;color:#999;transform:scale(.0893,.1);transform-origin:0 0">&#709;</span>
<div class="a gear" style="left:66.50px;top:181.10px"></div>
<span class="t sv" style="left:4.30px;top:187.83px;"><b>Administrators (1+)</b></span>
<span class="t sv" style="left:4.30px;top:195.63px;">Project administrators, Lewis Guy</span>
<span class="t sv" style="left:4.30px;top:203.13px;"><b>Privacy:</b> Public</span>
<div class="hr" style="top:210.50px"></div>
<span class="t sh" style="left:4.30px;top:213.43px;">Level model</span>
<span class="t" style="left:56.70px;top:213.80px;font-size:38.08px;color:#999;transform:scale(.0893,.1);transform-origin:0 0">&#709;</span>
<div class="a gear" style="left:66.50px;top:213.40px"></div>
<span class="t sv" style="left:4.30px;top:220.43px;"><b>Project setting:</b></span>
<span class="t sv" style="left:4.30px;top:225.53px;">AC02_CENTRAL MODEL.rvt</span>
<div class="hr" style="top:232.50px"></div>
<span class="t sh" style="left:4.30px;top:234.73px;">Grid models</span>
<span class="t" style="left:56.70px;top:235.10px;font-size:38.08px;color:#999;transform:scale(.0893,.1);transform-origin:0 0">&#709;</span>
<div class="a gear" style="left:66.50px;top:234.70px"></div>
<span class="t sv" style="left:4.30px;top:241.63px;"><b>Project setting:</b></span>
<span class="t sv" style="left:4.30px;top:246.53px;">AC02_CENTRAL MODEL.rvt</span>
<div class="hr" style="top:252.50px"></div>
<div class="pill" style="left:3.90px;top:257.00px;width:68.3px;height:9.6px;border-color:#bdbdbd;border-radius:5px"></div>
<span class="t sv" style="left:26.00px;top:259.83px;">Import settings</span>
<span class="t sk" style="left:4.30px;top:270.53px;color:#666">It is possible to transfer various</span>
<span class="t sk" style="left:4.30px;top:275.43px;color:#666">settings from another clash test to the</span>
<span class="t sk" style="left:4.30px;top:280.73px;color:#666">selected one(s).</span>
<div class="a" style="left:75.70px;top:123.50px;width:1.2px;height:30px;background:#b5b5b5"></div>
</div>
</div>
<div id="view" class="a">
<svg width="428.5" height="397.5" viewBox="321.5 24.5 428.5 397.5" style="position:absolute;left:0;top:0">
<defs>
  <linearGradient id="bg" x1="0" y1="0" x2="0" y2="1"><stop offset="0" stop-color="#222222"/><stop offset="0.12" stop-color="#2a2a2a"/><stop offset="0.3" stop-color="#2e2e2e"/><stop offset="1" stop-color="#2f2f2f"/></linearGradient>
  <radialGradient id="sph"><stop offset="0" stop-color="#b82424"/><stop offset="0.6" stop-color="#a02020"/><stop offset="1" stop-color="#a02020" stop-opacity="0"/></radialGradient>
</defs>
<rect x="321.5" y="24.5" width="428.5" height="397.5" fill="url(#bg)"/>
<g stroke="#557143" stroke-width="0.75" fill="none">
  <path d="M416 140.5 L634.5 134 L750 227"/>
  <path d="M416 140.5 L321.5 249.5"/>
  <path d="M416 140.5 L428.4 193.4 L627 184 L634.5 134"/>
  <path d="M428.4 193.4 L323 408.5"/>
  <path d="M627 184 L750 350"/>
  <path d="M321.5 410 L750 368"/>
</g>
<g stroke="none">
  <!-- upper wing -->
  <path fill="#8f1c1c" d="M424.5 171 Q425 167 429 166.8 L470 165.4 L480 164.4 L540 163.8 L568.4 162.8 L578.2 182.9 L461.3 183.5 L461.3 181 L424.5 181 Z"/>
  <!-- middle band -->
  <path fill="#7f1f1f" d="M461.3 181 L578.2 182.9 L625.3 182.8 L631.5 189 L628 213 L599 214 L605 223 L546.4 224.3 L513.8 230.2 L499.8 212.8 L499.8 195 L472 195 L461.3 188 Z"/>
  <path fill="#8c1e1e" opacity="0.5" d="M500 212 L600 208 L605 223 L546.4 224.3 L513.8 230.2 Z"/>
  <path fill="#a02222" opacity="0.45" d="M432 169 L560 165.5 L561 173 L432 176 Z"/>
  <!-- right wing -->
  <path fill="#7d1d1d" d="M625.3 182.8 L644 189 L676.2 225.7 L634.8 227.4 L628 213 L631.5 189 Z"/>
  <!-- lower-left block -->
  <path fill="#7a1e1e" d="M439.3 215.2 L453 215.2 L453 207.5 L472 207.5 L472 212.8 L499.8 212.8 L513.8 230.2 L484 314.3 L412 305 L417.5 282.5 L427 255.4 L429.9 251.2 Z"/>
  <path fill="#861d1d" d="M439.3 215.2 L453 215.2 L453 207.5 L472 207.5 L472 212.8 L499.8 212.8 L513.8 230.2 L508 240 L437 236 Z"/>
  <!-- right mass -->
  <path fill="#7b1e1e" d="M546.4 224.3 L605 223 L670 242 L681.3 260.9 L700.5 292.1 L684.9 298.9 Q680 306 679.2 318.7 L677.9 341.5 L666.7 337.2 L666.7 334 L656.3 331 L656.3 333.7 L645.9 330.3 L645.9 327.5 L635.5 324.5 L635.5 325.9 L623.3 323.3 L623.3 320.7 L593.9 316.4 L552.8 262.6 Z"/>
  <!-- left strips -->
  <path fill="#7a1e1e" d="M388 309.5 Q391.5 308 393.8 310.8 L386.5 338 L380.8 336.5 Z"/>
  <path fill="#7a1e1e" d="M369.5 338 Q373 334.5 375.8 338.5 L339.5 422 L331 422 Z"/>
</g>
<!-- dark holes -->
<g fill="#2a2a2a">
  <path d="M458.9 236.5 L496.2 236.5 L496.2 246.4 L458.9 246.4 Z"/>
  <path d="M517.8 198 L526.6 198 L526.6 211.3 L517.8 211.3 Z"/>
  <path d="M524.9 177.5 L532.9 177.5 L532.9 185.5 L524.9 185.5 Z"/>
  <path d="M427.5 266 L431 258 L434 259 L430.5 268 Z" fill="#3a2020"/>
</g>
<!-- spheres -->
<g fill="url(#sph)">
  <circle cx="491" cy="258.5" r="6"/>
  <circle cx="505" cy="212" r="5"/>
  <circle cx="567" cy="210" r="5"/>
  <circle cx="587" cy="250.6" r="5"/>
  <circle cx="611" cy="246.3" r="5"/>
  <circle cx="427" cy="175" r="4.5"/>
</g>
<!-- bright red edges -->
<g stroke="#a52222" stroke-width="1" fill="none" opacity="0.75">
  <path d="M593.9 316.4 L552.8 262.6 L546.4 224.3" stroke-width="1.3"/>
  <path d="M557 264.8 L587 251 L611 246.3" stroke-width="1.8"/>
  <path d="M588.3 252 L613.9 303.1" stroke-width="1"/>
  <path d="M625.2 323 Q626 290 636.6 274.7 Q648 258 667.8 249" stroke-width="1"/>
  <path d="M605 223 L670 242" stroke-width="0.9"/>
  <path d="M635.5 324.5 L634 290 M645.9 327.5 L645 292 M656.3 331 L656 296 M666.7 334 L667 300" stroke-width="0.5" opacity="0.6"/>
</g>
<g stroke="#3fd43f" stroke-width="0.7"><path d="M382.6 329 L390 321.5 M383.2 332 L390.4 324.5 M383.8 335 L390.8 327.5 M384.4 338 L391 331"/></g>
<g stroke="#141414" stroke-width="3.4" opacity="0.6"><path d="M321 386.6 L356 384.4 M321 390.1 L354.5 388 M321 393.6 L353 391.6 M321 397.1 L351.5 395.2"/></g><g stroke="#30e030" stroke-width="2.2"><path d="M320.5 386.6 L356.2 384.4 M320.5 390.1 L354.4 388 M320.5 393.6 L352.9 391.6 M320.5 397.1 L351.3 395.2"/></g>
<!-- pipes -->
<g stroke="#102010" stroke-width="2.8" fill="none" opacity="0.6"><path d="M474.4 157.1 L479.1 190.9 M477.9 160.7 L481.5 184.4 M485 159.5 L485.6 185.5 L479 190.5 M467.8 188 L473 215 M471 193 L475.5 214"/></g>
<g stroke="#44e044" stroke-width="1.5" fill="none">
  <path d="M474.4 157.1 L479.1 190.9"/>
  <path d="M477.9 160.7 L481.5 184.4"/>
  <path d="M485 159.5 L485.6 185.5 L479 190.5"/>
  <path d="M467.8 188 L473 215"/>
  <path d="M471 193 L475.5 214"/>
  <path d="M414.2 229.9 L435 229.1"/>
  <path d="M510 231 L540 229.5"/>
  <path d="M479.5 212 L480 216"/>
</g>
<g stroke="#c8ac48" stroke-width="0.7" fill="none" opacity="0.85">
  <path d="M487.2 169 L537.6 168.6 M487.2 172.2 L537.6 171.8 M537.6 167.5 L537.6 173"/>
  <path d="M465.5 184.4 L475.5 167.8"/>
  <path d="M456.9 234.1 L520 231.3 L545 230.5"/><path d="M435 229.1 L453 228.6"/><path d="M454.8 230.7 L451.5 249.8"/>
  <path d="M453 232 L459 215 M456 233 L462 216 M459.5 233 L465.5 216"/>
  <path d="M502.2 190 L502.2 225"/>
  <path d="M502 191 L625 185.5" opacity="0.45"/><path d="M570 188 L582 226" opacity="0.45"/><path d="M500 229.5 L580 228" opacity="0.4"/>
</g>
<g>
  <rect x="642.5" y="210" width="3" height="9" fill="#3fd43f" transform="rotate(-15 644 214)"/>
  <rect x="653" y="209" width="2.6" height="7" fill="#3fd43f" transform="rotate(-15 654 212)"/>
  <path d="M646 203 L647 217 M649 202 L650 215 M651.5 202 L652.5 214" stroke="#c8ac48" stroke-width="0.6"/>
</g>
</svg>

</div>
<div id="popup" class="a">
  <div class="pill" style="left:3.6px;top:4.9px;width:63px;height:6.5px;border-color:#c4c4c4"></div>
  <svg class="a" style="left:5.8px;top:5.8px" width="5" height="5" viewBox="0 0 5 5"><circle cx="2.1" cy="2.1" r="1.5" stroke="#888" stroke-width="0.5" fill="none"/><path d="M3.2 3.2 L4.4 4.4" stroke="#888" stroke-width="0.5"/></svg>
<div class="pit" style="top:15.40px"><i></i><span>Approved by</span></div>
<div class="pit" style="top:22.95px"><i></i><span>Area</span></div>
<div class="pit" style="top:30.50px"><i></i><span>Assignee</span></div>
<div class="pit" style="top:38.05px"><i></i><span>Deadline</span></div>
<div class="pit" style="top:45.60px"><i></i><span>Grouping</span></div>
<div class="pit" style="top:53.15px"><i></i><span>Linked to issue</span></div>
<div class="pit" style="top:60.70px"><i></i><span>Priority</span></div>
<div class="pit hl" style="top:68.25px"><i></i><span>Room</span></div>
<div class="pit" style="top:75.80px"><i></i><span>Space</span></div>
<div class="pit" style="top:83.35px"><i></i><span>Stamp</span></div>
<div class="pit" style="top:90.90px"><i></i><span>Tags</span></div>
<div class="pit" style="top:98.45px"><i></i><span>Zone</span></div>
</div>
<div class="a" style="left:486.8px;top:413.2px;width:30.4px;height:10px;background:#0a0a0a;border-radius:1.5px"></div>
<span class="t" style="left:490.6px;top:416.3px;font-size:100.8px;color:#e6e6e6;font-weight:bold;transform:scale(.0893,.1);transform-origin:0 0">04:53</span>
</div>
</body></html>
